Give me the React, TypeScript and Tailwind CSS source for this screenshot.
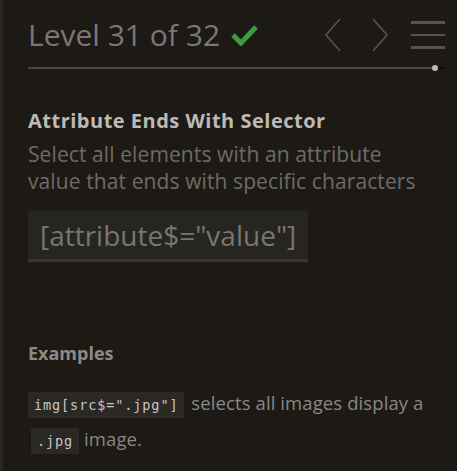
import { useState } from "react";

function Chevron({ dir }: { dir: "left" | "right" }) {
  const d = dir === "left" ? "M17 2 L3 18 L17 34" : "M3 2 L17 18 L3 34";
  return (
    <svg width="20" height="36" viewBox="0 0 20 36" className="text-[#555350]">
      <path d={d} fill="none" stroke="currentColor" strokeWidth="1.6" />
    </svg>
  );
}

function Code({ children, className = "" }: { children: string; className?: string }) {
  return (
    <code
      className={`bg-[#2b2925] px-[6px] py-[5px] font-['DejaVu_Sans_Mono',monospace] text-[13.5px] tracking-[0.9px] text-[#c8c6c2] ${className}`}
    >
      {children}
    </code>
  );
}

export default function App() {
  const [level] = useState(31);

  return (
    <div className="min-h-[471px] w-[457px] border-l-[3px] border-[#2a2723] bg-[#1d1a16] font-['Open_Sans',sans-serif]">
      <div className="pl-[25px] pr-[12px] pt-[12px]">
        <div className="flex items-center justify-between">
          <h2 className="flex items-center gap-[11px] text-[30px] font-medium leading-[46px] text-[#7a7876]">
            Level {level} of 32
            <svg width="27" height="22" viewBox="0 0 27 22">
              <path d="M2 11 L10 19 L25 3" fill="none" stroke="#3e9c3e" strokeWidth="5" />
            </svg>
          </h2>
          <div className="flex items-center">
            <Chevron dir="left" />
            <div className="w-[27px]" />
            <Chevron dir="right" />
            <div className="w-[21px]" />
            <div className="flex w-[34px] flex-col gap-[10px]">
              <div className="h-[3px] bg-[#555350]" />
              <div className="h-[2px] bg-[#555350]" />
              <div className="h-[3px] bg-[#555350]" />
            </div>
          </div>
        </div>
        <div className="mt-[7px] flex items-center">
          <div className="h-[2px] flex-1 bg-[#4a4744]" />
          <div className="h-[6px] w-[6px] rounded-full bg-[#bdbab6]" />
          <div className="h-[2px] w-[7px] bg-[#0f0d0b]" />
        </div>

        <h3 className="mt-[37px] text-[20px] font-bold leading-[26px] tracking-[0.5px] text-[#bcbab6]">
          Attribute Ends With Selector
        </h3>
        <p className="mt-[7px] whitespace-nowrap text-[21px] leading-[27px] tracking-[0.1px] text-[#6d6b68]">
          Select all elements with an attribute
          <br />
          value that ends with specific characters
        </p>
        <div className="mt-[16px] inline-block border-b-[3px] border-[#3a3833] bg-[#27251f] px-[12px] pb-[4px] pt-[5px] text-[28px] leading-[39px] text-[#787673]">
          [attribute$="value"]
        </div>

        <h4 className="mt-[80px] text-[18px] font-bold leading-[22px] text-[#8c8a86]">
          Examples
        </h4>
        <p className="mt-[22px] text-[18.5px] leading-[34px] tracking-[0.1px] text-[#898784]">
          <Code className="mr-[2px]">img[src$=".jpg"]</Code> selects all images display a{" "}
          <Code className="ml-[3px]">.jpg</Code> image.
        </p>
      </div>
    </div>
  );
}
